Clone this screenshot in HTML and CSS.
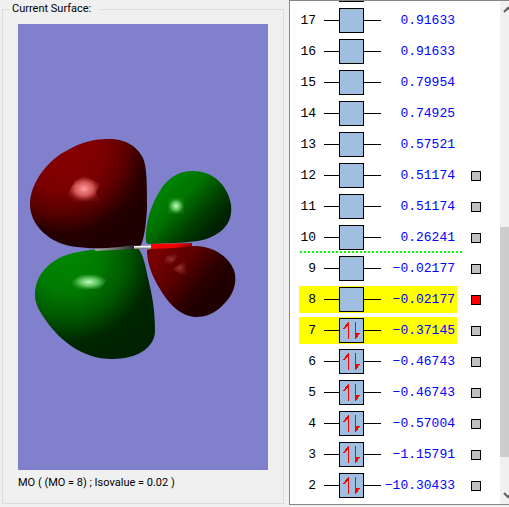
FILE: index.html
```
<!DOCTYPE html>
<html lang="en">
<head>
    <meta charset="UTF-8">
    <meta name="viewport" content="width=device-width, initial-scale=1.0">
    <title>Molecular Orbitals</title>
    <link rel="stylesheet" href="styles.css">
</head>
<body>
    <main class="editor">
        <fieldset class="surface">
            <legend>Current Surface:</legend>
            <svg class="view" viewBox="18 24 250 446" role="img" aria-label="Orbital surface">
                <defs>
                    <radialGradient id="redBig" gradientUnits="userSpaceOnUse" cx="62" cy="148" r="98">
                        <stop offset="0" stop-color="#880000"/>
                        <stop offset="0.42" stop-color="#7c0000"/>
                        <stop offset="0.65" stop-color="#5c0000"/>
                        <stop offset="0.86" stop-color="#280000"/>
                        <stop offset="1" stop-color="#200000"/>
                    </radialGradient>
                    <radialGradient id="greenBig" gradientUnits="userSpaceOnUse" cx="66" cy="256" r="102">
                        <stop offset="0" stop-color="#008800"/>
                        <stop offset="0.35" stop-color="#007a00"/>
                        <stop offset="0.6" stop-color="#005800"/>
                        <stop offset="0.84" stop-color="#002800"/>
                        <stop offset="1" stop-color="#002200"/>
                    </radialGradient>
                    <linearGradient id="greenSmall" gradientUnits="userSpaceOnUse" x1="160" y1="188" x2="208" y2="234">
                        <stop offset="0" stop-color="#008400"/>
                        <stop offset="0.35" stop-color="#007400"/>
                        <stop offset="0.75" stop-color="#003c00"/>
                        <stop offset="1" stop-color="#002200"/>
                    </linearGradient>
                    <linearGradient id="redSmall" gradientUnits="userSpaceOnUse" x1="156" y1="256" x2="206" y2="298">
                        <stop offset="0" stop-color="#780000"/>
                        <stop offset="0.4" stop-color="#5c0000"/>
                        <stop offset="0.8" stop-color="#2c0000"/>
                        <stop offset="1" stop-color="#200000"/>
                    </linearGradient>
                    <radialGradient id="redShine">
                        <stop offset="0" stop-color="#ffa0a0"/>
                        <stop offset="0.55" stop-color="#e86868" stop-opacity="0.8"/>
                        <stop offset="1" stop-color="#a02020" stop-opacity="0.2"/>
                    </radialGradient>
                    <radialGradient id="greenShine">
                        <stop offset="0" stop-color="#c4ffc0"/>
                        <stop offset="0.55" stop-color="#70d070" stop-opacity="0.8"/>
                        <stop offset="1" stop-color="#209020" stop-opacity="0.3"/>
                    </radialGradient>
                    <radialGradient id="faintShine">
                        <stop offset="0" stop-color="#a04040" stop-opacity="0.8"/>
                        <stop offset="1" stop-color="#801818" stop-opacity="0.3"/>
                    </radialGradient>
                    <linearGradient id="bondDark">
                        <stop offset="0" stop-color="#b0a8a8"/>
                        <stop offset="0.6" stop-color="#686868"/>
                        <stop offset="1" stop-color="#282828"/>
                    </linearGradient>
                    <linearGradient id="bondLight" x2="0" y2="1">
                        <stop offset="0" stop-color="#909090"/>
                        <stop offset="0.4" stop-color="#ffffff"/>
                        <stop offset="1" stop-color="#606060"/>
                    </linearGradient>
                    <linearGradient id="bondRed">
                        <stop offset="0" stop-color="#ff0000"/>
                        <stop offset="0.6" stop-color="#f00000"/>
                        <stop offset="1" stop-color="#900000"/>
                    </linearGradient>
                </defs>
                <rect x="18" y="24" width="250" height="446" fill="#8080cc"/>
                <!-- left lobes -->
                <path fill="url(#redBig)" d="M30 204C30 184 47 160 68 150C80 143 92 139 107 139C127 138 138 148 143 158C147 167 147 185 147 208C146 226 144 240 140 247C125 249 85 250 66 245C50 241 30 226 30 204Z"/>
                <path fill="url(#greenBig)" d="M35 295C35 274 51 255 84 251C102 248 120 248 137 247C143 253 145 264 148 278C152 295 155 308 155 332C154 348 137 359 112 359C82 359 60 340 47 322C39 311 35 304 35 295Z"/>
                <!-- right lobes -->
                <path fill="url(#redSmall)" d="M147 250C158 246 178 246 197 246C214 247 228 256 234 270C238 283 233 296 222 306C214 314 205 317 196 317C181 317 168 303 160 289C152 276 147 263 147 250Z"/>
                <path fill="url(#greenSmall)" d="M146 242C145 223 151 203 163 186C171 176 181 171 192 171C211 170 228 184 231 205C233 221 224 232 209 238C196 243 175 243 148 244Z"/>
                <!-- bonds -->
                <path fill="url(#bondDark)" d="M94 249L120 247L134 245V249L96 251Z"/>
                <path fill="url(#bondLight)" d="M134 246L152 245V249H134Z"/>
                <path fill="url(#bondRed)" d="M151 244L192 243V246L173 248L151 249Z"/>
                <!-- highlights -->
                <path fill="url(#redShine)" d="M67 195L75 181L84 176L101 184L96 192L100 201L74 202Z"/>
                <path fill="url(#greenShine)" d="M71 283L79 275L96 274L107 280L100 289L76 290Z"/>
                <rect fill="url(#greenShine)" x="168" y="198" width="16" height="16"/>
                <path fill="url(#faintShine)" d="M163 263L167 256L175 254L179 256L171 264Z"/>
                <path fill="url(#faintShine)" d="M172 269L185 261L187 275L181 274Z"/>
            </svg>
            <p class="caption">MO ( (MO = 8) ; Isovalue = 0.02 )</p>
        </fieldset>

        <section class="orbitals" aria-label="Orbital energies">
            <div class="levels" id="levels"></div>
            <div class="scrollbar">
                <svg class="arrow" viewBox="0 0 9 17"><path d="M4 11L8 7L12 11" fill="none" stroke="#606060" stroke-width="2"/></svg>
                <div class="track"><div class="thumb"></div></div>
                <svg class="arrow" viewBox="0 0 9 17"><path d="M4 6L8 10L12 6" fill="none" stroke="#606060" stroke-width="2"/></svg>
            </div>
        </section>
    </main>
    <script src="script.js"></script>
</body>
</html>
```
FILE: styles.css
```
body {
    margin: 0;
    background-color: #f0f0f0;
    color: #000;
    font-family: Roboto, "Liberation Sans", sans-serif;
    font-size: 11px;
    line-height: 14px;
}

.editor {
    display: flex;
    align-items: flex-start;
    overflow: hidden;
}

/* surface preview */
.surface {
    flex: 1;
    min-width: 0;
    margin: 2px 5px 0 2px;
    padding: 8px 15px 13px;
    border: 1px solid #dcdcdc;
}

.surface legend {
    margin-left: -8px;
    padding: 0 9px 0 2px;
}

.view {
    display: block;
    width: 100%;
    height: auto;
}

.caption {
    margin: 6px 0 0;
}

/* energy list */
.orbitals {
    display: flex;
    flex: 0 0 220px;
    box-sizing: border-box;
    height: 505px;
    border: 1px solid #828790;
    border-right: none;
    background-color: #fff;
}

.levels {
    display: flex;
    flex: 1;
    flex-direction: column;
    justify-content: flex-end;
    gap: 4px;
    overflow: hidden;
    padding: 0 9px 5px;
}

.row {
    display: flex;
    flex: none;
    align-items: center;
    gap: 14px;
    height: 27px;
}

.level {
    display: flex;
    align-items: center;
    width: 158px;
    height: 27px;
    font-family: "Liberation Mono", "Courier New", monospace;
    font-size: 13px;
}

.level.marked {
    background-color: #ff0;
}

.number {
    width: 17px;
    margin-right: 8px;
    text-align: right;
}

.wire {
    width: 15px;
    height: 1px;
    background-color: #000;
}

.wire.right {
    width: 17px;
}

.box {
    box-sizing: border-box;
    width: 25px;
    height: 25px;
    border: 1px solid #000;
    background-color: #a0bfe0;
}

.box svg {
    display: block;
    width: 23px;
    height: 23px;
}

.energy {
    display: flex;
    flex: 1;
    justify-content: flex-end;
    padding-right: 2px;
    color: #00f;
}

.pick {
    appearance: none;
    box-sizing: border-box;
    width: 10px;
    height: 10px;
    margin: 0;
    border: 1px solid #000;
    background-color: #c0c0c0;
}

.pick:checked {
    background-color: #f00;
}

.gap-line {
    flex: none;
    width: 162px;
    height: 2px;
    margin: -4px 0 -2px 1px;
    background: repeating-linear-gradient(to right, #0f0 0 2px, transparent 2px 4px);
}

/* scrollbar */
.scrollbar {
    display: flex;
    flex-direction: column;
    width: 9px;
    background-color: #f0f0f0;
}

.arrow {
    width: 9px;
    height: 17px;
}

.track {
    display: flex;
    flex: 1;
    flex-direction: column;
    justify-content: flex-end;
}

.thumb {
    height: 49%;
    margin-bottom: 30px;
    background-color: #cdcdcd;
}
```
FILE: script.js
```
const orbitals = [
    ["", ""],
    [17, "0.91633"],
    [16, "0.91633"],
    [15, "0.79954"],
    [14, "0.74925"],
    [13, "0.57521"],
    [12, "0.51174"],
    [11, "0.51174"],
    [10, "0.26241"],
    [9, "-0.02177"],
    [8, "-0.02177"],
    [7, "-0.37145"],
    [6, "-0.46743"],
    [5, "-0.46743"],
    [4, "-0.57004"],
    [3, "-1.15791"],
    [2, "-10.30433"]
];

// paired electrons, spin up and spin down
const spins = `<svg viewBox="0 0 23 23" fill="#f00" shape-rendering="crispEdges">
    <path d="M8 3H9V20H8V7H7V8H6V9H5V10H3V9H4V8H5V6H6V5H7V4H8Z"/>
    <path d="M15 3H16V14H20V15H19V16H18V18H17V19H16V20H15Z"/>
</svg>`;

const list = document.getElementById("levels");

orbitals.forEach(([n, energy]) => {
    const marked = n === 8 || n === 7 ? " marked" : "";
    // only levels up to 12 have a surface
    const pick = n && n <= 12
        ? `<input type="checkbox" class="pick" aria-label="Orbital ${n}"${n === 8 ? " checked" : ""}>`
        : "";

    list.insertAdjacentHTML("beforeend", `
        <div class="row">
            <div class="level${marked}">
                <span class="number">${n}</span>
                <span class="wire"></span>
                <span class="box">${n && n <= 7 ? spins : ""}</span>
                <span class="wire right"></span>
                <span class="energy">${energy.replace("-", "\u2212")}</span>
            </div>
            ${pick}
        </div>`);

    // line between empty levels and the frontier ones
    if (n === 10) {
        list.insertAdjacentHTML("beforeend", '<div class="gap-line"></div>');
    }
});
```
